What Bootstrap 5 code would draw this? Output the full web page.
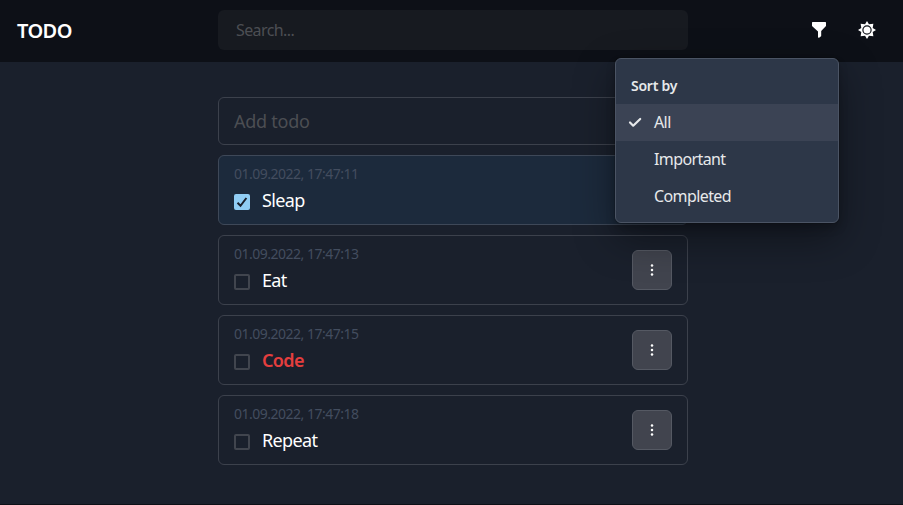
<!DOCTYPE html>
<html lang="en">
<head>
<meta charset="utf-8">
<meta name="viewport" content="width=device-width, initial-scale=1">
<title>TODO</title>
<link href="https://cdn.jsdelivr.net/npm/bootstrap@5.3.0/dist/css/bootstrap.min.css" rel="stylesheet">
<style>
body{font-family:"Segoe UI","Noto Sans",sans-serif;background:#1a202c;color:#f2f3f4;font-size:16px;overflow:hidden}
.app{height:505px;border-bottom:1px solid #0d1017}
.topbar{height:62px;padding-bottom:2px;background:#0d1017;display:grid;grid-template-columns:218px 470px 1fr}
.brand-name{font-size:20px;font-weight:600;letter-spacing:-.55px;padding:2px 0 0 17px;color:#fff}
.form-control.search-box{height:40px;background:#171a20;border:0;border-radius:6px;padding:0 18px;font-size:16px;letter-spacing:-.6px}
.form-control.search-box::placeholder,.form-control.add-box::placeholder{color:#4c4e53;opacity:1}
.form-control.add-box{height:48px;background:transparent;border:1px solid #3c414c;border-radius:6px;padding:0 15px;font-size:18px;letter-spacing:-.25px}
.tool-btn{width:40px;height:40px;border:0;padding:0;background:none;color:#fff}
.todo-col{width:470px;margin-left:218px;padding-top:35px;gap:10px}
.todo-item{height:70px;border:1px solid #3c414c;border-radius:6px;padding:0 15px}
.todo-item.done{background:#1c2a3c;border-color:#3e4858}
.stamp{font-size:14px;line-height:21px;margin:-3px 0 3px;color:#434d5f;letter-spacing:-.5px}
.todo-text{font-size:18px;line-height:27px;letter-spacing:-.65px;color:#fff}
.todo-text.urgent{color:#e53e3e;font-weight:600}
.tick{width:16px;height:16px;border:2px solid #41454e;border-radius:2px;margin-top:2px}
.done .tick{background:#90cdf4;border-color:#90cdf4;color:#1a202c}
.more-btn{width:40px;height:40px;padding:0;background:#41444e;border:1px solid #555963;border-radius:6px;color:#fff}
.sort-menu{position:absolute;left:615px;top:58px;width:224px;height:165px;background:#2d3748;border:1px solid #4b5464;border-radius:6px;padding:16px 0 0;color:#e7e9eb;z-index:5;
box-shadow:rgba(0,0,0,.1) 0 0 0 1px,rgba(0,0,0,.2) 0 5px 10px,rgba(0,0,0,.4) 0 15px 40px}
.sort-title{font-size:14px;font-weight:600;line-height:21px;margin:0 15px 8px;letter-spacing:-.25px}
.sort-option{height:37px;padding:0 12px 2px;color:inherit;letter-spacing:-.6px;gap:12px}
.sort-option.active{background:#3b4354}
.check-slot{width:14px;height:14px}
</style>
</head>
<body>
<div class="app position-relative">
  <header class="topbar align-items-center">
    <div class="brand-name">TODO</div>
    <input class="form-control search-box" placeholder="Search...">
    <div class="d-flex justify-content-end gap-2 pe-3">
      <button class="tool-btn d-flex align-items-center justify-content-center" aria-label="Sort"><svg width="16" height="18" viewBox="0 0 16 18" fill="currentColor"><path d="M1.6 1h12.8q.6 0 .6.7v3.200L10.200 10V14.700q0 .6-.5.9l-1.600 1.100q-1.100.5-1.100-.6V10.400L1 4.900V1.700q0-.7.600-.7Z"/></svg></button>
      <button class="tool-btn d-flex align-items-center justify-content-center" aria-label="Theme"><svg width="18" height="18" viewBox="0 0 18 18" fill="currentColor"><path fill-rule="evenodd" d="m9 0 1.950 3.300 4.410-.66-.66 4.410L18 9l-3.300 1.950.66 4.410-4.410-.66L9 18l-1.950-3.300-4.410.66.66-4.410L0 9l3.300-1.950-.66-4.410 4.410.66ZM9 4.300a4.700 4.700 0 1 0 0 9.400 4.700 4.700 0 0 0 0-9.400Z"/><circle cx="9" cy="9" r="3.500"/></svg></button>
    </div>
  </header>
  <div class="sort-menu">
    <div class="sort-title">Sort by</div>
    <a class="sort-option active d-flex align-items-center text-decoration-none"><svg class="check-slot" viewBox="0 0 14 14" fill="none" stroke="currentColor" stroke-width="2.200" stroke-linecap="round" stroke-linejoin="round"><path d="m2 7.500 3.200 3.200L12.200 4"/></svg><span>All</span></a>
    <a class="sort-option d-flex align-items-center text-decoration-none"><span class="check-slot"></span><span>Important</span></a>
    <a class="sort-option d-flex align-items-center text-decoration-none"><span class="check-slot"></span><span>Completed</span></a>
  </div>
  <main class="todo-col d-flex flex-column">
    <input class="form-control add-box" placeholder="Add todo">
    <div class="todo-item done d-flex align-items-center justify-content-between">
      <div><div class="stamp">01.09.2022, 17:47:11</div><div class="d-flex align-items-center"><span class="tick d-flex align-items-center justify-content-center"><svg class="flex-shrink-0" width="12" height="12" viewBox="0 0 12 12" fill="none" stroke="currentColor" stroke-width="2"><path d="m1.500 6.800 3 3L10.400 2"/></svg></span><span class="todo-text ms-2 ps-1">Sleap</span></div></div>
      <button class="more-btn d-flex align-items-center justify-content-center" aria-label="More"><svg width="4" height="14" fill="currentColor"><circle cx="2" cy="2.500" r="1.250"/><circle cx="2" cy="7" r="1.250"/><circle cx="2" cy="11.500" r="1.250"/></svg></button>
    </div>
    <div class="todo-item d-flex align-items-center justify-content-between">
      <div><div class="stamp">01.09.2022, 17:47:13</div><div class="d-flex align-items-center"><span class="tick"></span><span class="todo-text ms-2 ps-1">Eat</span></div></div>
      <button class="more-btn d-flex align-items-center justify-content-center" aria-label="More"><svg width="4" height="14" fill="currentColor"><circle cx="2" cy="2.500" r="1.250"/><circle cx="2" cy="7" r="1.250"/><circle cx="2" cy="11.500" r="1.250"/></svg></button>
    </div>
    <div class="todo-item d-flex align-items-center justify-content-between">
      <div><div class="stamp">01.09.2022, 17:47:15</div><div class="d-flex align-items-center"><span class="tick"></span><span class="todo-text urgent ms-2 ps-1">Code</span></div></div>
      <button class="more-btn d-flex align-items-center justify-content-center" aria-label="More"><svg width="4" height="14" fill="currentColor"><circle cx="2" cy="2.500" r="1.250"/><circle cx="2" cy="7" r="1.250"/><circle cx="2" cy="11.500" r="1.250"/></svg></button>
    </div>
    <div class="todo-item d-flex align-items-center justify-content-between">
      <div><div class="stamp">01.09.2022, 17:47:18</div><div class="d-flex align-items-center"><span class="tick"></span><span class="todo-text ms-2 ps-1">Repeat</span></div></div>
      <button class="more-btn d-flex align-items-center justify-content-center" aria-label="More"><svg width="4" height="14" fill="currentColor"><circle cx="2" cy="2.500" r="1.250"/><circle cx="2" cy="7" r="1.250"/><circle cx="2" cy="11.500" r="1.250"/></svg></button>
    </div>
  </main>
</div>
<script src="https://cdn.jsdelivr.net/npm/bootstrap@5.3.0/dist/js/bootstrap.bundle.min.js"></script>
</body>
</html>
